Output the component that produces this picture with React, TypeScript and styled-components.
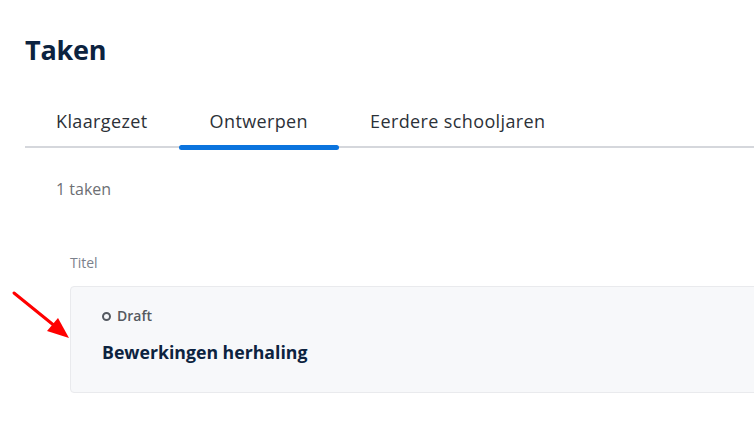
import React from 'react';
import styled, { createGlobalStyle } from 'styled-components';

const GlobalStyle = createGlobalStyle`
  html, body {
    margin: 0;
    padding: 0;
    background: #ffffff;
    overflow: hidden;
  }
  body {
    font-family: "Open Sans", "Liberation Sans", sans-serif;
  }
`;

const Page = styled.div`
  position: relative;
  width: 754px;
  height: 447px;
  padding: 30px 0 0 25px;
  box-sizing: border-box;
  overflow: hidden;
`;

const Title = styled.h1`
  margin: 0;
  font-size: 27px;
  line-height: 40px;
  font-weight: 700;
  color: #0c2340;
  letter-spacing: -0.2px;
`;

const TabBar = styled.div`
  display: flex;
  margin-top: 25px;
  border-bottom: 2px solid #d5d7dc;
  height: 53px;
  box-sizing: border-box;
`;

const Tab = styled.div<{ $active?: boolean }>`
  position: relative;
  padding: 0 31px;
  font-size: 18px;
  line-height: 52px;
  color: #2c3138;
  white-space: nowrap;
  letter-spacing: 0.38px;

  &::after {
    content: '';
    display: ${(p) => (p.$active ? 'block' : 'none')};
    position: absolute;
    left: 0;
    right: 0;
    bottom: -4px;
    height: 5px;
    border-radius: 3px;
    background: #0b74de;
  }
`;

const Count = styled.div`
  margin: 30px 0 0 31px;
  font-size: 16px;
  line-height: 22px;
  color: #6d6f74;
`;

const Column = styled.div`
  margin: 53px 0 0 45px;
  font-size: 14px;
  line-height: 20px;
  color: #7b818c;
`;

const Card = styled.div`
  margin: 13px 0 0 45px;
  width: 700px;
  height: 107px;
  box-sizing: border-box;
  padding: 19px 31px 0;
  background: #f7f8fa;
  border: 1px solid #e9eaed;
  border-radius: 4px;
`;

const Status = styled.div`
  display: flex;
  align-items: center;
  gap: 6px;
  font-size: 14px;
  font-weight: 600;
  line-height: 20px;
  color: #555a61;
`;

const Dot = styled.span`
  width: 9px;
  height: 9px;
  box-sizing: border-box;
  border: 2.5px solid #555a61;
  border-radius: 50%;
`;

const TaskName = styled.div`
  margin-top: 14px;
  font-size: 17.7px;
  font-weight: 700;
  line-height: 24px;
  color: #0c2340;
`;

const Arrow = styled.svg`
  position: absolute;
  left: 0;
  top: 280px;
`;

export default function App() {
  return (
    <>
      <GlobalStyle />
      <Page>
        <Title>Taken</Title>
        <TabBar>
          <Tab>Klaargezet</Tab>
          <Tab $active>Ontwerpen</Tab>
          <Tab>Eerdere schooljaren</Tab>
        </TabBar>
        <Count>1 taken</Count>
        <Column>Titel</Column>
        <Card>
          <Status>
            <Dot />
            Draft
          </Status>
          <TaskName>Bewerkingen herhaling</TaskName>
        </Card>
        <Arrow width="80" height="70" viewBox="0 0 80 70">
          <line x1="14" y1="13" x2="56" y2="47" stroke="#f00" strokeWidth="3" strokeLinecap="round" />
          <polygon points="58,38 47,51 69,58" fill="#f00" />
        </Arrow>
      </Page>
    </>
  );
}
